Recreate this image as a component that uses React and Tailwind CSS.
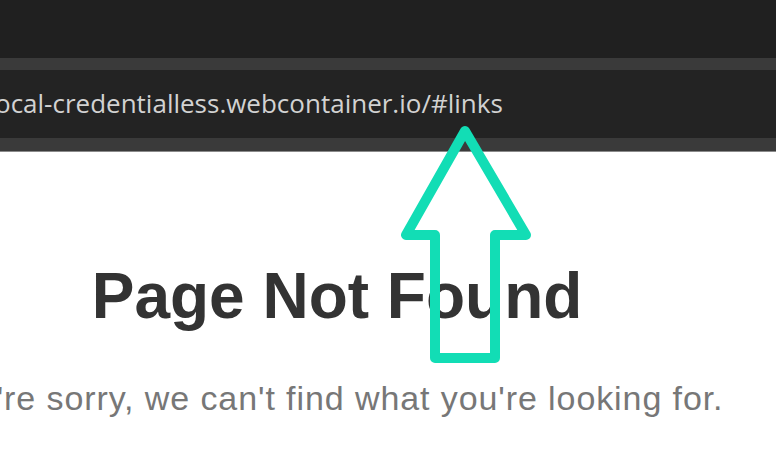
import React from 'react';

// Browser chrome with the address bar, over a plain 404 page
export default function App() {
  return (
    <div className="relative w-[776px] h-[458px] overflow-hidden bg-white">
      {/* top window bar */}
      <div className="h-[58px] bg-[#202020]" />
      <div className="h-[12px] bg-[#3a3a3a]" />

      {/* address bar */}
      <div className="h-[68px] bg-[#232323] flex items-center overflow-hidden">
        <span
          className="-ml-[5px] pb-[2px] whitespace-nowrap text-[26px] text-[#d2d2d2]"
          style={{ fontFamily: '"Open Sans", "Noto Sans", sans-serif' }}
        >
          ocal-credentialless.webcontainer.io/#links
        </span>
      </div>
      <div className="h-[13px] bg-[#3a3a3a]" />
      <div className="h-px bg-[#8a8a8a]" />

      {/* page content */}
      <main
        className="-ml-[113px] w-[900px] pt-[112px] flex flex-col items-center whitespace-nowrap"
        style={{ fontFamily: '"Liberation Sans", Arial, sans-serif' }}
      >
        <h1 className="text-[64px] leading-none font-bold text-[#333333]">Page Not Found</h1>
        <p className="mt-[53px] mr-[6px] text-[34px] leading-none tracking-[0.91px] text-[#777777]">
          We're sorry, we can't find what you're looking for.
        </p>
      </main>

      {/* annotation arrow */}
      <svg className="absolute left-0 top-0 pointer-events-none" width="776" height="458" viewBox="0 0 776 458">
        <path
          d="M465 131 L406 235 L435 235 L435 358 L495 358 L495 235 L526 235 Z"
          fill="none"
          stroke="#12ddb5"
          strokeWidth="10"
          strokeLinejoin="round"
        />
      </svg>
    </div>
  );
}
